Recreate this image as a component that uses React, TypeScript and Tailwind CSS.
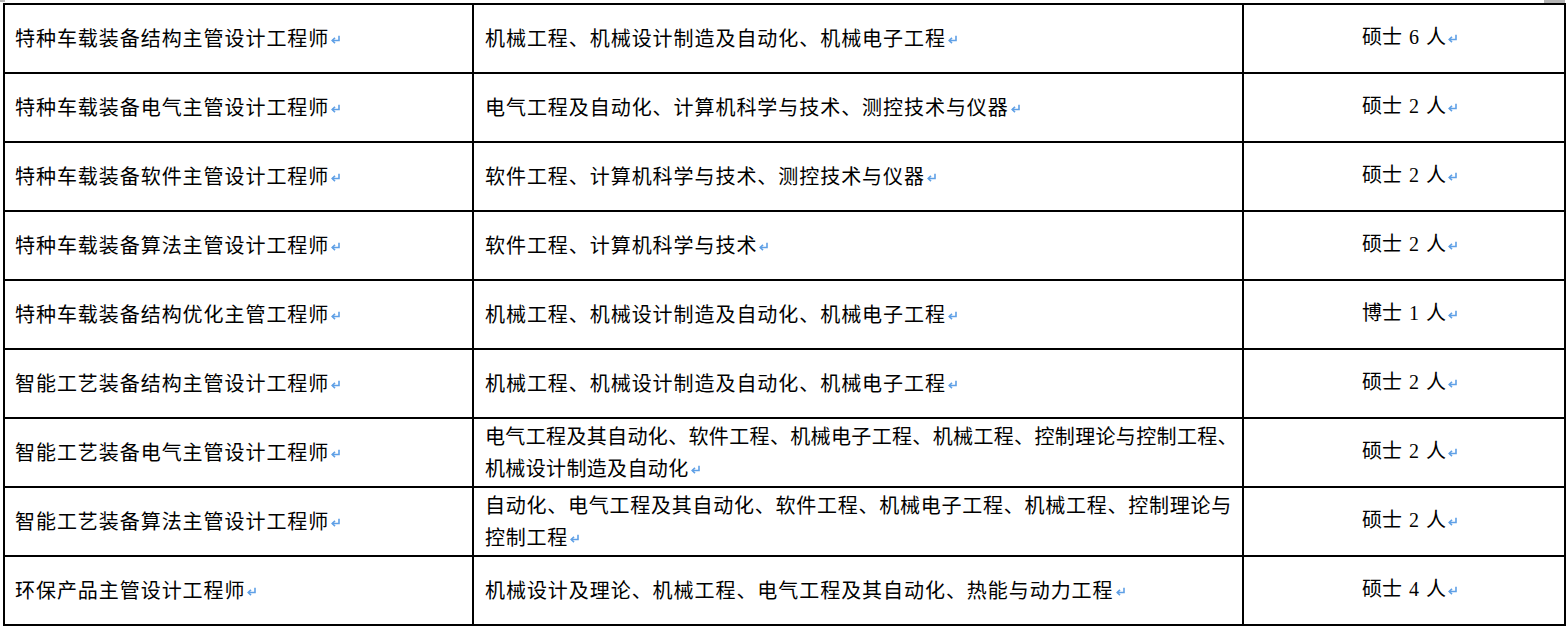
import React from "react";

const Mark = () => (
  <svg
    width="11"
    height="9"
    viewBox="0 0 11 9"
    className="inline-block align-middle ml-[1px] mb-[2px]"
  >
    <path d="M9 0.8 V5.5 H2.2" fill="none" stroke="#5fa0e6" strokeWidth="1.6" />
    <path d="M5 2.8 L2.2 5.5 L5 8.2" fill="none" stroke="#5fa0e6" strokeWidth="1.6" />
  </svg>
);

type Row = { title: string; major: string[]; degree: string; num: string; track: string };

const rows: Row[] = [
  { title: "特种车载装备结构主管设计工程师", major: ["机械工程、机械设计制造及自动化、机械电子工程"], degree: "硕士", num: "6", track: "tracking-[0.95px]" },
  { title: "特种车载装备电气主管设计工程师", major: ["电气工程及自动化、计算机科学与技术、测控技术与仪器"], degree: "硕士", num: "2", track: "tracking-[0.95px]" },
  { title: "特种车载装备软件主管设计工程师", major: ["软件工程、计算机科学与技术、测控技术与仪器"], degree: "硕士", num: "2", track: "tracking-[0.95px]" },
  { title: "特种车载装备算法主管设计工程师", major: ["软件工程、计算机科学与技术"], degree: "硕士", num: "2", track: "tracking-[0.95px]" },
  { title: "特种车载装备结构优化主管工程师", major: ["机械工程、机械设计制造及自动化、机械电子工程"], degree: "博士", num: "1", track: "tracking-[0.95px]" },
  { title: "智能工艺装备结构主管设计工程师", major: ["机械工程、机械设计制造及自动化、机械电子工程"], degree: "硕士", num: "2", track: "tracking-[0.95px]" },
  {
    title: "智能工艺装备电气主管设计工程师",
    major: ["电气工程及其自动化、软件工程、机械电子工程、机械工程、控制理论与控制工程、", "机械设计制造及自动化"],
    degree: "硕士",
    num: "2",
    track: "tracking-[0.35px]",
  },
  {
    title: "智能工艺装备算法主管设计工程师",
    major: ["自动化、电气工程及其自动化、软件工程、机械电子工程、机械工程、控制理论与", "控制工程"],
    degree: "硕士",
    num: "2",
    track: "tracking-[0.75px]",
  },
  { title: "环保产品主管设计工程师", major: ["机械设计及理论、机械工程、电气工程及其自动化、热能与动力工程"], degree: "硕士", num: "4", track: "tracking-[0.95px]" },
];

const cjk = { fontFamily: '"Noto Sans CJK SC", "Noto Sans", sans-serif' };
const mixed = { fontFamily: '"Liberation Serif", "Noto Sans CJK SC", serif' };

export default function App() {
  return (
    <div className="w-[1568px] h-[626px] bg-white overflow-hidden text-black">
      <div className="flex h-[3px]">
        <div className="w-[5px] h-[2px] bg-[#b4b4b4]" />
        <div className="flex-1" />
        <div className="w-[21px] h-[3px] bg-[#b4b4b4] mr-[3px]" />
      </div>
      <div className="ml-[3px] w-[1563px] grid grid-cols-[469px_770px_322px] border-l-2 border-t-2 border-black">
        {rows.map((r, i) => (
          <React.Fragment key={i}>
            <div
              className="h-[69px] border-r-2 border-b-2 border-black flex items-center pl-[10px] pb-[2px] text-[20px] tracking-[0.95px] leading-[33px] whitespace-nowrap"
              style={cjk}
            >
              <span>
                {r.title}
                <Mark />
              </span>
            </div>
            <div
              className={`h-[69px] border-r-2 border-b-2 border-black flex items-center pl-[11px] pb-[2px] text-[20px] leading-[32px] whitespace-nowrap ${r.track}`}
              style={cjk}
            >
              <span>
                {r.major.map((m, j) => (
                  <React.Fragment key={j}>
                    {j > 0 && <br />}
                    {m}
                    {j === r.major.length - 1 && <Mark />}
                  </React.Fragment>
                ))}
              </span>
            </div>
            <div
              className="h-[69px] border-r-2 border-b-2 border-black flex items-center justify-center pl-[12px] pb-[2px] text-[20px] leading-[33px] whitespace-nowrap"
              style={mixed}
            >
              <span>
                {r.degree}
                <span className="mx-[7px]">{r.num}</span>
                人
                <Mark />
              </span>
            </div>
          </React.Fragment>
        ))}
      </div>
    </div>
  );
}
